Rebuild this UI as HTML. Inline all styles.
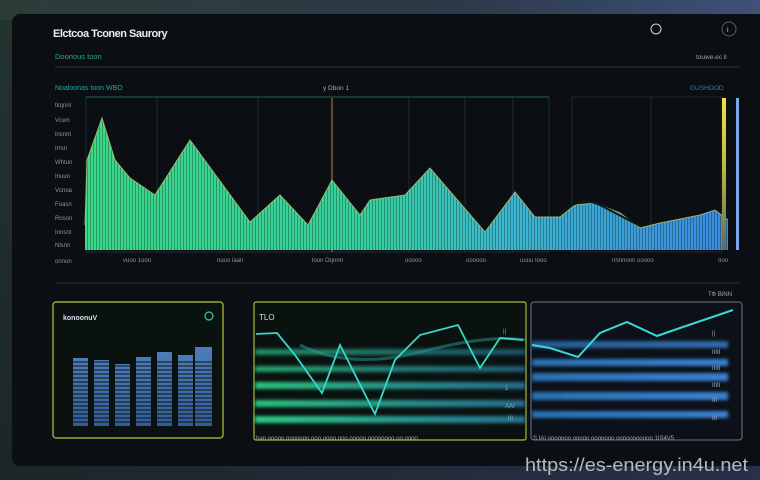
<!DOCTYPE html>
<html><head><meta charset="utf-8"><style>
html,body{margin:0;padding:0;width:760px;height:480px;overflow:hidden;background:#1a2426;}
svg{display:block}
text{font-family:"Liberation Sans",sans-serif}
</style></head><body>
<svg width="760" height="480" viewBox="0 0 760 480" xmlns="http://www.w3.org/2000/svg">
<defs>
<linearGradient id="bg" x1="0" y1="0" x2="1" y2="1">
<stop offset="0" stop-color="#24342f"/><stop offset="0.5" stop-color="#1b2628"/><stop offset="1" stop-color="#2a2f4a"/></linearGradient>
<linearGradient id="bgtop" x1="0" y1="0" x2="1" y2="0">
<stop offset="0" stop-color="#2c3d38"/><stop offset="0.6" stop-color="#2b3a48"/><stop offset="1" stop-color="#40507a"/></linearGradient>
<linearGradient id="area" x1="0" y1="0" x2="1" y2="0">
<stop offset="0" stop-color="#3cd888"/><stop offset="0.45" stop-color="#38d0a0"/><stop offset="0.65" stop-color="#3cb8d0"/><stop offset="1" stop-color="#3a88e0"/></linearGradient>
<pattern id="stripe" width="3" height="10" patternUnits="userSpaceOnUse"><rect x="0" y="0" width="1" height="10" fill="#062018" fill-opacity="0.35"/></pattern>
<linearGradient id="hg" x1="0" y1="0" x2="1" y2="0">
<stop offset="0" stop-color="#30e090"/><stop offset="0.6" stop-color="#2aa0a0"/><stop offset="1" stop-color="#2a7aa0"/></linearGradient>
<linearGradient id="hb" x1="0" y1="0" x2="1" y2="0">
<stop offset="0" stop-color="#2a70b0"/><stop offset="1" stop-color="#3a80d0"/></linearGradient>
<linearGradient id="vb" x1="0" y1="0" x2="0" y2="1">
<stop offset="0" stop-color="#5a8fd8"/><stop offset="1" stop-color="#3a6ab0"/></linearGradient>
<linearGradient id="ybar" x1="0" y1="0" x2="0" y2="1">
<stop offset="0" stop-color="#f0e040"/><stop offset="0.4" stop-color="#c0c040"/><stop offset="1" stop-color="#606a60"/></linearGradient>
<filter id="blur"><feGaussianBlur stdDeviation="1.5"/></filter>
</defs>
<rect width="760" height="480" fill="url(#bg)"/>
<rect width="760" height="20" fill="url(#bgtop)"/>
<rect x="12" y="14" width="760" height="452" rx="8" fill="#0b0f13"/>

<text x="53" y="37" font-size="11" fill="#e8eef0" font-weight="bold" letter-spacing="-0.5">Elctcoa Tconen Saurory</text>
<circle cx="656" cy="29" r="5" fill="none" stroke="#c8d0d8" stroke-width="1"/>
<circle cx="729" cy="29" r="7" fill="none" stroke="#555e6a" stroke-width="1"/>
<text x="727" y="32" font-size="7" fill="#c8d0d8">i</text>
<text x="55" y="59" font-size="7.5" fill="#2aa88a">Doonous toon</text>
<text x="696" y="59" font-size="6.5" fill="#9aa2aa">touwe.ec  ll</text>
<line x1="55" y1="67" x2="740" y2="67" stroke="#2a3a3a" stroke-width="1"/>
<text x="55" y="90" font-size="7" fill="#20a8a0">Noaloonas toon WBO</text>
<text x="323" y="90" font-size="6.5" fill="#aab">y  Dbon  1</text>
<text x="690" y="90" font-size="6.5" fill="#2a80b8">GUSHOOD</text>

<g stroke="#1b3a40" stroke-width="0.8" fill="none">
<rect x="86" y="97" width="463" height="155"/>
<rect x="572" y="97" width="150" height="155" stroke="#2a2a3a"/>
<line x1="157" y1="97" x2="157" y2="252"/><line x1="258" y1="97" x2="258" y2="252"/>
<line x1="409" y1="97" x2="409" y2="252"/><line x1="465" y1="97" x2="465" y2="252"/>
<line x1="513" y1="97" x2="513" y2="252"/><line x1="651" y1="97" x2="651" y2="252"/>
</g>
<line x1="332" y1="98" x2="332" y2="252" stroke="#d0783a" stroke-width="1"/>
<line x1="86" y1="97" x2="549" y2="97" stroke="#1e6650" stroke-width="1"/>

<g font-size="6" fill="#8a96a0">
<text x="55" y="107">tkqnnl</text><text x="55" y="122">Vcwn</text><text x="55" y="136">lnsnnt</text><text x="55" y="150">Irrsn</text><text x="55" y="164">Whtun</text><text x="55" y="178">Inuun</text><text x="55" y="192">Vcnoa</text><text x="55" y="206">Foasn</text><text x="55" y="220">Rnson</text><text x="55" y="234">Innsnt</text><text x="55" y="247">Nlsnn</text>
<text x="55" y="263">onnon</text><text x="123" y="262">vuoo  1oon</text><text x="217" y="262">nuoo  laan</text><text x="312" y="262">loon  Oqnnn</text><text x="405" y="262">ooooo</text><text x="466" y="262">oooooo</text><text x="520" y="262">uuuu  Iooo</text><text x="612" y="262">nnnnnnn  ooooo</text><text x="718" y="262">ooo</text>
</g>

<path d="M85,250 L85,225 L87,160 L102,118 L115,160 L130,178 L155,195 L190,140 L250,222 L280,195 L308,225 L332,180 L360,215 L370,200 L405,195 L430,168 L485,232 L515,192 L535,217 L560,217 L575,205 L595,203 L620,213 L640,228 L660,223 L700,215 L715,210 L728,220 L728,250 Z" fill="url(#area)"/>
<path d="M85,250 L85,225 L87,160 L102,118 L115,160 L130,178 L155,195 L190,140 L250,222 L280,195 L308,225 L332,180 L360,215 L370,200 L405,195 L430,168 L485,232 L515,192 L535,217 L560,217 L575,205 L595,203 L620,213 L640,228 L660,223 L700,215 L715,210 L728,220 L728,250 Z" fill="url(#stripe)"/>
<path d="M85,225 L87,160 L102,118 L115,160 L130,178 L155,195 L190,140 L250,222 L280,195 L308,225 L332,180 L360,215 L370,200 L405,195 L430,168 L485,232 L515,192 L535,217 L560,217 L575,205 L595,203 L620,213 L640,228 L660,223 L700,215 L715,210 L728,220" fill="none" stroke="#b8c870" stroke-width="1" opacity="0.8"/>
<path d="M560,214 Q580,195 600,205 L640,226" fill="none" stroke="#0a1a14" stroke-width="2"/>
<rect x="722" y="98" width="4" height="152" fill="url(#ybar)"/>
<rect x="736" y="98" width="3" height="152" fill="#7aa8e8"/>
<line x1="55" y1="283" x2="740" y2="283" stroke="#1e3a36" stroke-width="1"/>
<text x="708" y="296" font-size="6" fill="#9aa">ТФ BINN</text>

<rect x="53" y="302" width="170" height="136" rx="3" fill="#0a1210" stroke="#b8c840" stroke-width="1.2"/>
<text x="63" y="320" font-size="7" fill="#dde" font-weight="bold">konoonuV</text>
<circle cx="209" cy="316" r="4" fill="none" stroke="#30c8b8" stroke-width="1.2"/>
<g fill="url(#vb)" opacity="0.85">
<rect x="73" y="358" width="15" height="68"/><rect x="94" y="360" width="15" height="66"/><rect x="115" y="364" width="15" height="62"/><rect x="136" y="357" width="15" height="69"/><rect x="157" y="352" width="15" height="74"/><rect x="178" y="355" width="15" height="71"/><rect x="195" y="347" width="17" height="79"/>
</g>
<g stroke="#0a1210" stroke-width="1"><line x1="70" y1="362" x2="214" y2="362"/><line x1="70" y1="366" x2="214" y2="366"/><line x1="70" y1="370" x2="214" y2="370"/><line x1="70" y1="374" x2="214" y2="374"/><line x1="70" y1="378" x2="214" y2="378"/><line x1="70" y1="382" x2="214" y2="382"/><line x1="70" y1="386" x2="214" y2="386"/><line x1="70" y1="390" x2="214" y2="390"/><line x1="70" y1="394" x2="214" y2="394"/><line x1="70" y1="398" x2="214" y2="398"/><line x1="70" y1="402" x2="214" y2="402"/><line x1="70" y1="406" x2="214" y2="406"/><line x1="70" y1="410" x2="214" y2="410"/><line x1="70" y1="414" x2="214" y2="414"/><line x1="70" y1="418" x2="214" y2="418"/><line x1="70" y1="422" x2="214" y2="422"/></g>

<rect x="254" y="302" width="272" height="138" rx="2" fill="#0a1210" stroke="#a8b840" stroke-width="1.2"/>
<text x="259" y="320" font-size="8" fill="#dde">TLO</text>
<g filter="url(#blur)">
<rect x="255" y="349" width="270" height="6" fill="url(#hg)" opacity="0.6"/>
<rect x="255" y="366" width="270" height="6" fill="url(#hg)" opacity="0.7"/>
<rect x="255" y="382" width="270" height="7" fill="url(#hg)" opacity="0.85"/>
<rect x="255" y="400" width="270" height="7" fill="url(#hg)" opacity="0.85"/>
<rect x="255" y="416" width="270" height="7" fill="url(#hg)" opacity="0.9"/>
</g>
<path d="M300,345 Q350,370 420,352 T525,340" fill="none" stroke="#2a9a98" stroke-width="3" opacity="0.5"/>
<path d="M256,334 L277,333 L295,355 L322,393 L340,345 L375,414 L395,360 L420,335 L458,325 L480,368 L500,338 L523,340" fill="none" stroke="#38d8c8" stroke-width="1.8"/>
<g font-size="6" fill="#8aa"><text x="503" y="333">||</text><text x="505" y="390">1</text><text x="505" y="408">AAI</text><text x="508" y="420">III</text></g>
<text x="256" y="440" font-size="6" fill="#9ab">han  ooooo  ooooooo  ooo  oooo  ooo  ooooo  oooooooo  oo  oooo</text>

<rect x="531" y="302" width="211" height="138" rx="3" fill="#0c1018" stroke="#6a7a80" stroke-width="1"/>
<g fill="url(#hb)" filter="url(#blur)">
<rect x="532" y="341" width="196" height="7" opacity="0.8"/>
<rect x="532" y="359" width="196" height="7"/>
<rect x="532" y="373" width="196" height="8"/>
<rect x="532" y="392" width="196" height="8"/>
<rect x="532" y="411" width="196" height="7"/>
</g>
<path d="M532,345 L550,348 L578,357 L600,333 L627,322 L657,336 L680,328 L733,310" fill="none" stroke="#38d8d8" stroke-width="2"/>
<g font-size="6" fill="#aab"><text x="712" y="335">||</text><text x="712" y="354">IIIII</text><text x="712" y="370">IIIII</text><text x="712" y="387">IIIII</text><text x="712" y="402">III</text><text x="712" y="420">III</text></g>
<text x="533" y="440" font-size="6" fill="#9ab">S.IAI  ooooooo  ooooo  ooooooo  ooooooooooo   1IS4V5</text>

<text x="748" y="471" font-size="18.5" fill="#c8ccd0" text-anchor="end" opacity="0.9" textLength="223" lengthAdjust="spacingAndGlyphs">https://es-energy.in4u.net</text>
</svg>
</body></html>
